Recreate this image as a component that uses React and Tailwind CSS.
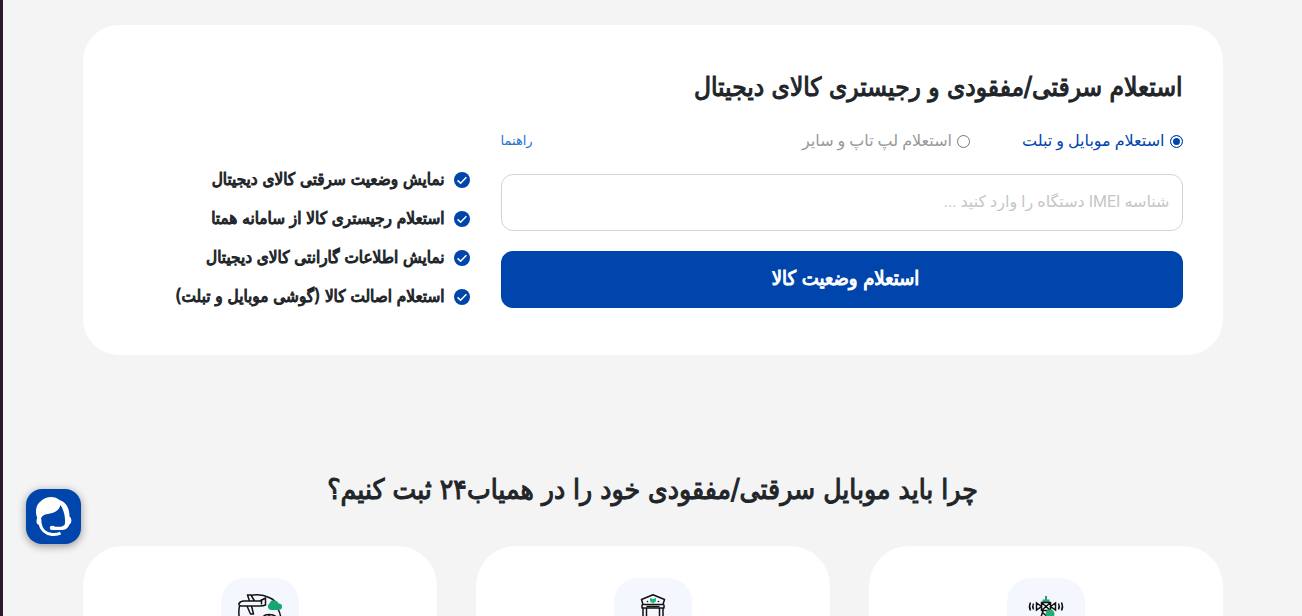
import { useState } from "react";

const features = [
  "نمایش وضعیت سرقتی کالای دیجیتال",
  "استعلام رجیستری کالا از سامانه همتا",
  "نمایش اطلاعات گارانتی کالای دیجیتال",
  "استعلام اصالت کالا (گوشی موبایل و تبلت)",
];

function CheckIcon() {
  return (
    <svg viewBox="0 0 16 16" className="size-4 shrink-0" aria-hidden="true">
      <circle cx="8" cy="8" r="8" fill="#0045ac" />
      <path d="M3.6 8.4 6.6 11.2 12.4 5.2" fill="none" stroke="#fff" strokeWidth="1.5" />
    </svg>
  );
}

function TowerIcon() {
  return (
    <svg viewBox="0 0 46 46" className="size-[46px]" fill="none" stroke="#111" strokeWidth="1.5" aria-hidden="true">
      <path d="M23 2v6" stroke="#13693f" />
      <path d="M19.500 5.500h7v3.500h-7z" fill="#1fae74" stroke="none" />
      <path d="M18.500 8.500h9v8h-9zM18.500 8.500l9 8M27.500 8.500l-9 8M18.500 12.500l-5-3.500v7zM27.500 12.500l5-3.500v7zM20 17l-3 9M26 17l3 9M20 19l7 6" />
      <path d="M10.500 9.500q-1.500 3 0 6M7.500 8.500q-2 4 0 8M35.500 9.500q1.500 3 0 6M38.500 8.500q2 4 0 8" />
      <circle cx="27" cy="20" r="4.500" fill="#1fae74" stroke="none" />
    </svg>
  );
}

function GateIcon() {
  return (
    <svg viewBox="0 0 46 46" className="size-[46px]" fill="none" stroke="#111" strokeWidth="1.5" aria-hidden="true">
      <path d="M23 .8 11.500 5.500l1.500 5h20l1.500-5zM12 10.500v3.500h22v-3.500" strokeLinejoin="round" />
      <path d="M13 14v22M16.500 14v22M29.500 14v22M33 14v22M16.500 12.500h13" />
      <path d="M20 4l3 1 3-1v3.300L23 9.500l-3-2.200z" fill="#20b779" stroke="none" />
      <circle cx="17.500" cy="7.500" r=".8" fill="#111" stroke="none" />
      <circle cx="28.500" cy="7.500" r=".8" fill="#111" stroke="none" />
    </svg>
  );
}

function PlaneIcon() {
  return (
    <svg viewBox="0 0 46 46" className="size-[46px]" fill="none" stroke="#111" strokeWidth="1.500" strokeLinejoin="round" aria-hidden="true">
      <path d="M14 1.500Q24-.5 32 3.500q4 1.500 6 4M41 15q5 9 1 18M2.500 12q-2 9 2 19" />
      <path d="M12.500 7 10.500 1h3.500l3.500 6M28.500 4v7q-2 1-6 1H4q-2.500-.5-2-2.500 1.500-2.500 5-2.500h16zM10 12l3.500 8h3l-2-8M24.500 5v5.500" fill="#f4f8fe" />
      <path d="M34 16a3.500 3.500 0 0 1-1.500-6.500q1.500-4.500 5-3 3.500.5 4 3 3.500 0 3.500 3.200T41 16z" fill="#17a66f" stroke="none" />
      <path d="M25 25q1-4.500 7-4.500t9 4M32 21v4" />
    </svg>
  );
}

function SupportIcon() {
  return (
    <svg viewBox="0 0 36 40" className="h-10 w-9" aria-hidden="true">
      <path
        d="M4 26C-2 18-1 8 5 4c5-5 14-5 18.500-1C30 5 33.500 11 33.500 19.500c2.500 1.500 2.500 6.500 0 8C31.500 32 29 33 25 33h-9.500a2.200 2.200 0 0 1 0-4.300c2.500-.2 3.500 1.300 5.500 1h4c3-.7 4-1.700 4-3.700.5-8-2-14-4.500-18C23 13 20 15.500 14 16.500 8 17.500 4.500 19 5 24z"
        fill="#fff"
      />
      <ellipse cx="3" cy="24" rx="2.500" ry="3.800" fill="#fff" />
      <path d="M4 26c1 7 6 11 12 11.500 4 .2 7-.5 8.500-1.500" fill="none" stroke="#fff" strokeWidth="3" />
    </svg>
  );
}

const reasons = [TowerIcon, GateIcon, PlaneIcon];

export default function App() {
  const [kind, setKind] = useState("mobile");
  const radio =
    "size-[13px] appearance-none rounded-full border border-[#767676] bg-white checked:border-[#0045ac] checked:bg-[#0045ac] checked:shadow-[inset_0_0_0_2px_white]";
  const strong =
    "font-['DejaVu_Sans_Condensed','DejaVu_Sans',sans-serif] font-normal [-webkit-text-stroke:1px_currentColor]";
  return (
    <div
      dir="rtl"
      className="relative h-screen overflow-hidden border-l-3 border-[#2c1a2b] bg-[#f4f4f4] font-['Roboto','DejaVu_Sans',sans-serif] text-[#212529]"
    >
      <main className="mx-auto max-w-[1140px] pt-[25px]">
        <section className="rounded-[36px] bg-white px-10 pt-10 pb-[39px]">
          <h1 className={`text-[26px] leading-[44px] ${strong}`}>
            استعلام سرقتی/مفقودی و رجیستری کالای دیجیتال
          </h1>
          <div className="mt-2 flex gap-[31px]">
            <form className="min-w-0 grow-[682] basis-0" onSubmit={(e) => e.preventDefault()}>
              <div className="flex h-12 items-center">
                <label className={`flex items-center gap-[5px] text-base ${kind === "mobile" ? "text-[#0045ac]" : "text-[#999]"}`}>
                  <input type="radio" name="kind" className={radio} checked={kind === "mobile"} onChange={() => setKind("mobile")} />
                  استعلام موبایل و تبلت
                </label>
                <label className={`mr-13 flex items-center gap-[5px] text-base ${kind === "laptop" ? "text-[#0045ac]" : "text-[#999]"}`}>
                  <input type="radio" name="kind" className={radio} checked={kind === "laptop"} onChange={() => setKind("laptop")} />
                  استعلام لپ تاپ و سایر
                </label>
                <a href="#help" className="mr-auto text-[13px] text-[#2372d0]">راهنما</a>
              </div>
              <input
                type="text"
                aria-label="شناسه IMEI دستگاه"
                placeholder="شناسه IMEI دستگاه را وارد کنید ..."
                className="mt-[9px] block h-[57px] w-full rounded-xl border border-[#ced4da] px-3 pb-0.5 text-base placeholder:text-[#c6c6c6]"
              />
              <button
                type="submit"
                className={`mt-5 block h-[57px] w-full rounded-xl bg-[#0045ac] pb-1 pl-2 text-xl text-white ${strong}`}
              >
                استعلام وضعیت کالا
              </button>
            </form>
            <ul className={`grow-[347] basis-0 pt-[43px] ${strong}`}>
              {features.map((text) => (
                <li key={text} className="flex h-[39px] items-center gap-[9px] text-[17px] whitespace-nowrap">
                  <CheckIcon />
                  {text}
                </li>
              ))}
            </ul>
          </div>
        </section>

        <h2 className={`mt-[113px] text-center text-[28px] leading-[44px] ${strong}`}>
          چرا باید موبایل سرقتی/مفقودی خود را در همیاب۲۴ ثبت کنیم؟
        </h2>
        <div className="mt-[34px] grid grid-cols-3 gap-[39px]">
          {reasons.map((Icon, i) => (
            <article key={i} className="flex h-60 justify-center rounded-[40px] bg-white pt-8">
              <div className="flex size-[78px] items-center justify-center rounded-3xl bg-[#f4f8fe]">
                <Icon />
              </div>
            </article>
          ))}
        </div>
      </main>

      <button
        type="button"
        aria-label="پشتیبانی"
        className="absolute bottom-18 left-[23px] flex size-[55px] items-center justify-center rounded-2xl bg-[#0045ac] shadow-[0_2px_8px_rgba(0,0,0,0.4)]"
      >
        <SupportIcon />
      </button>
    </div>
  );
}
